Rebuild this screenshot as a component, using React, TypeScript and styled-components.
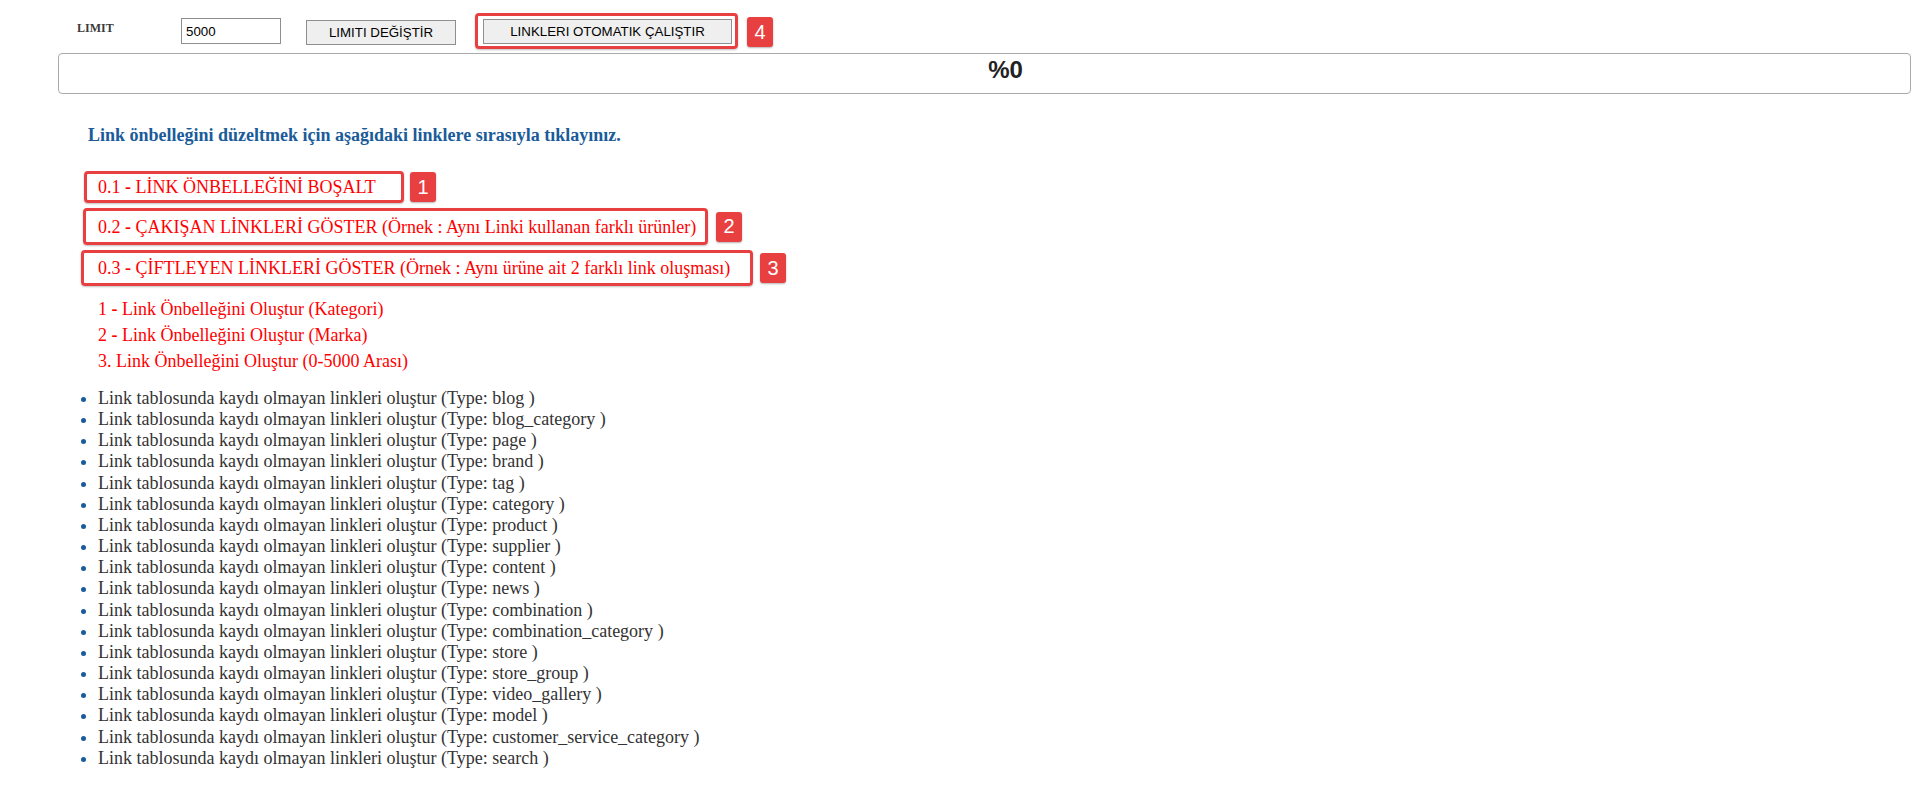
import React from "react";
import styled, { createGlobalStyle } from "styled-components";

const GlobalStyle = createGlobalStyle`
  * {
    box-sizing: border-box;
  }
  body {
    margin: 0;
    background: #fff;
    font-family: "Liberation Serif", "Times New Roman", serif;
  }
`;

const types = [
  "blog",
  "blog_category",
  "page",
  "brand",
  "tag",
  "category",
  "product",
  "supplier",
  "content",
  "news",
  "combination",
  "combination_category",
  "store",
  "store_group",
  "video_gallery",
  "model",
  "customer_service_category",
  "search",
];

const App = () => {
  return (
    <Page>
      <GlobalStyle />
      <Toolbar>
        <Label>LIMIT</Label>
        <LimitInput defaultValue="5000" />
        <Button $w={150}>LIMITI DEĞİŞTİR</Button>
        <Mark $pad="0 3px 0 5px">
          <Button $w={249}>LINKLERI OTOMATIK ÇALIŞTIR</Button>
        </Mark>
        <Badge $gap={9}>4</Badge>
      </Toolbar>

      <Progress>%0</Progress>

      <Heading>Link önbelleğini düzeltmek için aşağıdaki linklere sırasıyla tıklayınız.</Heading>

      <MarkedRows>
        <Row>
          <MarkedLink $left={26} $w={320} $h={32} $pl={11}>
            <span>
              0.1 <Dash>-</Dash> LİNK ÖNBELLEĞİNİ BOŞALT
            </span>
          </MarkedLink>
          <Badge $gap={6}>1</Badge>
        </Row>
        <Row>
          <MarkedLink $left={25} $w={625} $h={37} $pl={12}>
            <span>
              0.2 <Dash>-</Dash> ÇAKIŞAN LİNKLERİ GÖSTER (Örnek : Aynı Linki kullanan farklı ürünler)
            </span>
          </MarkedLink>
          <Badge $gap={8}>2</Badge>
        </Row>
        <Row>
          <MarkedLink $left={23} $w={672} $h={36} $pl={14}>
            <span>
              0.3 <Dash>-</Dash> ÇİFTLEYEN LİNKLERİ GÖSTER (Örnek : Aynı ürüne ait 2 farklı link oluşması)
            </span>
          </MarkedLink>
          <Badge $gap={7}>3</Badge>
        </Row>
      </MarkedRows>

      <Steps>
        <StepLink>
          1 <Dash>-</Dash> Link Önbelleğini Oluştur (Kategori)
        </StepLink>
        <StepLink>
          2 <Dash>-</Dash> Link Önbelleğini Oluştur (Marka)
        </StepLink>
        <StepLink>3. Link Önbelleğini Oluştur (0-5000 Arası)</StepLink>
      </Steps>

      <TypeList>
        {types.map((t) => (
          <TypeItem key={t}>Link tablosunda kaydı olmayan linkleri oluştur (Type: {t} )</TypeItem>
        ))}
      </TypeList>
    </Page>
  );
};

export default App;

const Page = styled.div`
  padding: 13px 9px 0 58px;
`;

const Toolbar = styled.div`
  display: flex;
  align-items: flex-start;
  height: 36px;
  padding-left: 19px;
`;

const Label = styled.div`
  width: 104px;
  padding-top: 8px;
  font-size: 12px;
  line-height: 14px;
  font-weight: bold;
  color: #3a3a3a;
`;

const LimitInput = styled.input`
  margin-top: 5px;
  width: 100px;
  height: 26px;
  border: 1px solid #8f8f8f;
  padding: 0 4px;
  font-family: "Liberation Sans", Arial, sans-serif;
  font-size: 13.3px;
  color: #000;
  outline: none;
`;

const Button = styled.button<{ $w: number }>`
  width: ${(p) => p.$w}px;
  height: 25px;
  margin-top: 7px;
  margin-left: 25px;
  background: #efefef;
  border: 1px solid #8f8f8f;
  font-family: "Liberation Sans", Arial, sans-serif;
  font-size: 13.3px;
  color: #000;
  padding: 0;
  cursor: pointer;
`;

const Mark = styled.div<{ $pad: string }>`
  display: flex;
  align-items: center;
  height: 36px;
  margin-left: 19px;
  padding: ${(p) => p.$pad};
  border: 3px solid #e84040;
  border-radius: 4px;
  box-shadow: 0 1px 2px rgba(0, 0, 0, 0.25);

  ${Button} {
    margin: 0;
  }
`;

const Badge = styled.div<{ $gap: number }>`
  display: flex;
  align-items: center;
  justify-content: center;
  width: 26px;
  height: 30px;
  margin-left: ${(p) => p.$gap}px;
  margin-top: 4px;
  background: #e84040;
  border-radius: 3px;
  box-shadow: 0 1px 2px rgba(0, 0, 0, 0.3);
  color: #fff;
  font-family: "Liberation Sans", Arial, sans-serif;
  font-size: 20px;
`;

const Progress = styled.div`
  display: flex;
  align-items: center;
  justify-content: center;
  height: 41px;
  margin-top: 4px;
  padding: 0 0 7px 42px;
  border: 1px solid #aaa;
  border-radius: 4px;
  font-family: "Liberation Sans", Arial, sans-serif;
  font-size: 24px;
  font-weight: bold;
  color: #222;
`;

const Heading = styled.div`
  margin-top: 31px;
  padding-left: 30px;
  font-size: 18px;
  line-height: 21px;
  font-weight: bold;
  color: #1a5b99;
`;

const MarkedRows = styled.div`
  display: flex;
  flex-direction: column;
  gap: 5px;
  margin-top: 25px;
`;

const Row = styled.div`
  display: flex;
  align-items: center;

  ${Badge} {
    margin-top: 0;
  }
`;

const MarkedLink = styled.a<{ $left: number; $w: number; $h: number; $pl: number }>`
  display: flex;
  align-items: center;
  width: ${(p) => p.$w}px;
  height: ${(p) => p.$h}px;
  margin-left: ${(p) => p.$left}px;
  padding-left: ${(p) => p.$pl}px;
  border: 3px solid #e84040;
  border-radius: 4px;
  box-shadow: 0 1px 2px rgba(0, 0, 0, 0.25);
  color: #ff0000;
  font-size: 18px;
  line-height: 20px;
  text-decoration: none;
  white-space: nowrap;
`;

const Dash = styled.b`
  font-weight: bold;
`;

const Steps = styled.div`
  display: flex;
  flex-direction: column;
  margin-top: 10px;
  padding-left: 40px;
`;

const StepLink = styled.a`
  color: #ff0000;
  font-size: 18px;
  line-height: 26px;
  text-decoration: none;
`;

const TypeList = styled.ul`
  margin: 14px 0 0;
  padding-left: 40px;
`;

const TypeItem = styled.li`
  font-size: 18px;
  line-height: 21.15px;
  color: #333;

  &::marker {
    color: #1a5b99;
  }
`;
